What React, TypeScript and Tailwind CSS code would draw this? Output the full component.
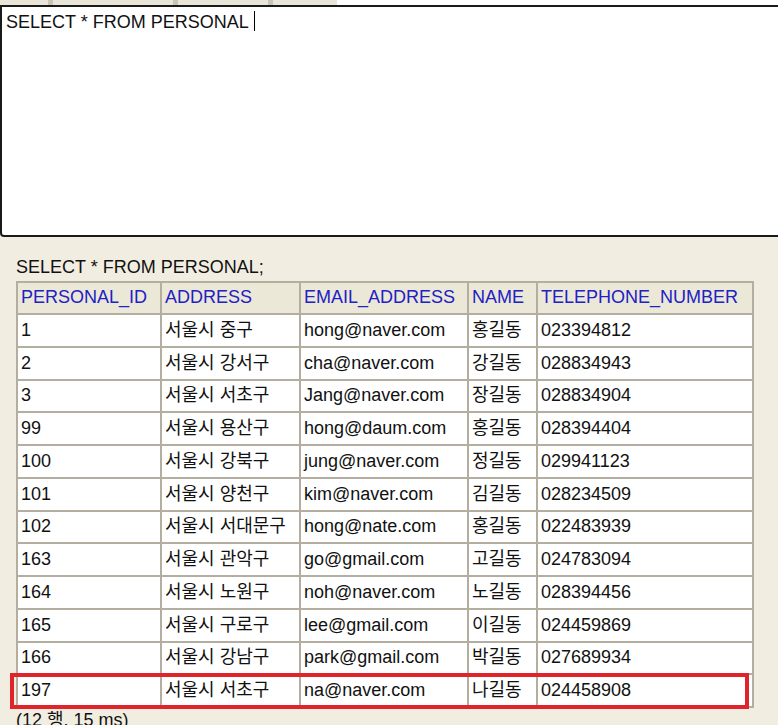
import React from "react";

const rows: [string, string, string, string, string][] = [
  ["1", "서울시 중구", "hong@naver.com", "홍길동", "023394812"],
  ["2", "서울시 강서구", "cha@naver.com", "강길동", "028834943"],
  ["3", "서울시 서초구", "Jang@naver.com", "장길동", "028834904"],
  ["99", "서울시 용산구", "hong@daum.com", "홍길동", "028394404"],
  ["100", "서울시 강북구", "jung@naver.com", "정길동", "029941123"],
  ["101", "서울시 양천구", "kim@naver.com", "김길동", "028234509"],
  ["102", "서울시 서대문구", "hong@nate.com", "홍길동", "022483939"],
  ["163", "서울시 관악구", "go@gmail.com", "고길동", "024783094"],
  ["164", "서울시 노원구", "noh@naver.com", "노길동", "028394456"],
  ["165", "서울시 구로구", "lee@gmail.com", "이길동", "024459869"],
  ["166", "서울시 강남구", "park@gmail.com", "박길동", "027689934"],
  ["197", "서울시 서초구", "na@naver.com", "나길동", "024458908"],
];

const headers = ["PERSONAL_ID", "ADDRESS", "EMAIL_ADDRESS", "NAME", "TELEPHONE_NUMBER"];

export default function App() {
  return (
    <div className="relative h-[725px] w-[778px] overflow-hidden bg-[#f1eee1] font-['Liberation_Sans','Noto_Sans_CJK_KR',sans-serif] text-[18px] text-[#111]">
      {/* tab strip */}
      <div className="flex h-[5px] bg-white">
        <div className="w-[48px] bg-[#e9e6d8]" />
        <div className="w-[5px] bg-[#c9c5b5]" />
        <div className="w-[120px] bg-[#e9e6d8]" />
        <div className="w-[5px] bg-[#c9c5b5]" />
        <div className="w-[90px] bg-[#e9e6d8]" />
        <div className="w-[5px] bg-[#c9c5b5]" />
        <div className="w-[64px] bg-[#e9e6d8]" />
      </div>

      {/* editor */}
      <div className="h-[232px] w-[800px] rounded-bl-[4px] border-2 border-[#1a1a1a] bg-white px-[4px] pt-[1px] leading-[22px]">
        <span>SELECT * FROM PERSONAL</span>
        <span className="ml-[5px] inline-block h-[20px] w-px translate-y-[3px] bg-black" />
      </div>

      {/* result */}
      <div className="pl-4 pt-[19px]">
        <div className="leading-[22px]">SELECT * FROM PERSONAL;</div>
        <div className="relative mt-[3px] w-[736px]">
          <table className="w-[736px] table-fixed border-collapse border-2 border-[#b3ae9f]">
            <colgroup>
              <col className="w-[144px]" />
              <col className="w-[139px]" />
              <col className="w-[168px]" />
              <col className="w-[69px]" />
              <col className="w-[216px]" />
            </colgroup>
            <thead>
              <tr className="h-[32px] bg-[#ebe8d8]">
                {headers.map((h) => (
                  <th
                    key={h}
                    className="border-2 border-[#b3ae9f] px-[3px] pb-[1px] text-left font-normal text-[#2121c4]"
                  >
                    {h}
                  </th>
                ))}
              </tr>
            </thead>
            <tbody>
              {rows.map((r) => (
                <tr key={r[0]} className="h-[32.75px] bg-white">
                  {r.map((c, i) => (
                    <td
                      key={i}
                      className="whitespace-nowrap border-2 border-[#b3ae9f] px-[3px] pb-[1px] leading-[20px]"
                    >
                      {c}
                    </td>
                  ))}
                </tr>
              ))}
            </tbody>
          </table>
          {/* highlight */}
          <div className="pointer-events-none absolute left-[-6px] top-[392px] h-[36px] w-[739px] border-4 border-[#e1242b]" />
        </div>
        <div className="mt-[1px] leading-[22px]">(12 행, 15 ms)</div>
      </div>
    </div>
  );
}
